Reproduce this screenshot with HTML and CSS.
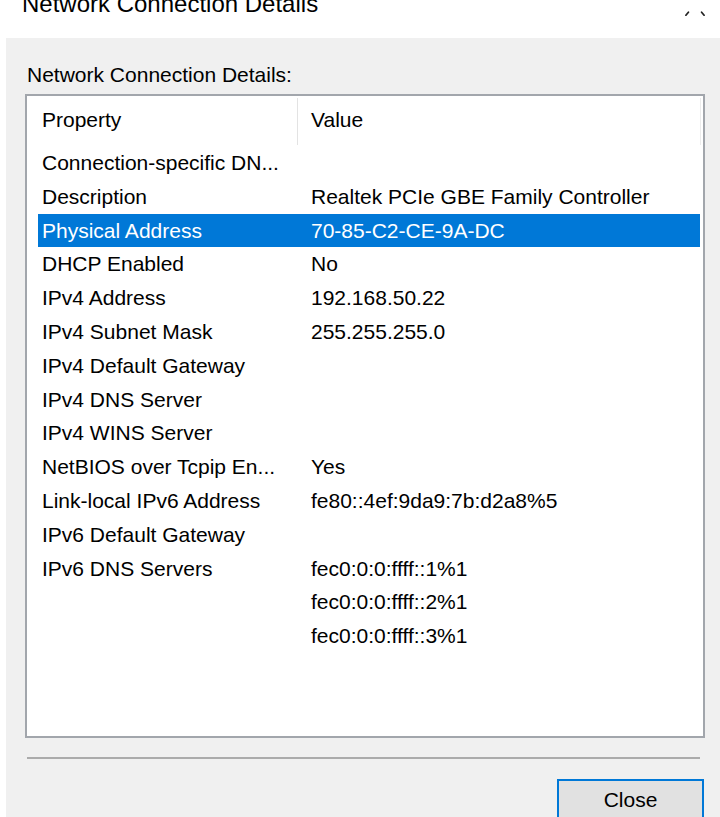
FILE: index.html
```html
<!DOCTYPE html>
<html lang="en">
<head>
<meta charset="utf-8">
<title>Network Connection Details</title>
<link rel="stylesheet" href="styles.css">
</head>
<body>
<div class="window">
  <div class="titlebar">
    <span class="title">Network Connection Details</span>
    <svg class="close-x" viewBox="0 0 20 16" aria-hidden="true">
      <path d="M3.4 12.2 L0.9 15.3 M16.6 12.2 L19.1 15.3" stroke="#222" stroke-width="1.7" stroke-linecap="round" fill="none"/>
    </svg>
  </div>
  <div class="dialog">
    <div class="label">Network Connection Details:</div>
    <div class="list">
      <div class="list-header">
        <div class="hcol hcol-prop">Property</div>
        <div class="hcol hcol-val">Value</div>
      </div>
      <div class="rows">
        <div class="row"><span class="cell-prop">Connection-specific DN...</span><span class="cell-val"></span></div>
        <div class="row"><span class="cell-prop">Description</span><span class="cell-val">Realtek PCIe GBE Family Controller</span></div>
        <div class="row selected"><span class="cell-prop">Physical Address</span><span class="cell-val">70-85-C2-CE-9A-DC</span></div>
        <div class="row"><span class="cell-prop">DHCP Enabled</span><span class="cell-val">No</span></div>
        <div class="row"><span class="cell-prop">IPv4 Address</span><span class="cell-val">192.168.50.22</span></div>
        <div class="row"><span class="cell-prop">IPv4 Subnet Mask</span><span class="cell-val">255.255.255.0</span></div>
        <div class="row"><span class="cell-prop">IPv4 Default Gateway</span><span class="cell-val"></span></div>
        <div class="row"><span class="cell-prop">IPv4 DNS Server</span><span class="cell-val"></span></div>
        <div class="row"><span class="cell-prop">IPv4 WINS Server</span><span class="cell-val"></span></div>
        <div class="row"><span class="cell-prop">NetBIOS over Tcpip En...</span><span class="cell-val">Yes</span></div>
        <div class="row"><span class="cell-prop">Link-local IPv6 Address</span><span class="cell-val">fe80::4ef:9da9:7b:d2a8%5</span></div>
        <div class="row"><span class="cell-prop">IPv6 Default Gateway</span><span class="cell-val"></span></div>
        <div class="row"><span class="cell-prop">IPv6 DNS Servers</span><span class="cell-val">fec0:0:0:ffff::1%1</span></div>
        <div class="row"><span class="cell-prop"></span><span class="cell-val">fec0:0:0:ffff::2%1</span></div>
        <div class="row"><span class="cell-prop"></span><span class="cell-val">fec0:0:0:ffff::3%1</span></div>
      </div>
    </div>
    <div class="sep"></div>
    <div class="actions">
      <button class="btn" type="button">Close</button>
    </div>
  </div>
</div>
</body>
</html>
```
FILE: styles.css
```css
html, body {
  margin: 0;
  height: 817px;
  overflow: hidden;
  background: #ffffff;
  font-family: "Liberation Sans", Arial, sans-serif;
  color: #000000;
}

/* caption strip of the window, scrolled partly out of view */
.titlebar {
  height: 38px;
  display: flex;
  justify-content: space-between;
  align-items: flex-start;
  overflow: hidden;
}

.title {
  font-size: 24px;
  line-height: 24px;
  margin: -8px 0 0 22px;
  white-space: nowrap;
}

.close-x {
  width: 20px;
  height: 16px;
  margin-right: 15px;
}

/* dialog client area */
.dialog {
  margin-left: 6px;
  height: 779px;
  box-sizing: border-box;
  background: #f0f0f0;
  padding: 25px 15px 0 19px;
}

.label {
  font-size: 21px;
  line-height: 24px;
  margin: 0 0 7px 2px;
  white-space: nowrap;
}

/* list view */
.list {
  height: 644px;
  box-sizing: border-box;
  border: 2px solid #a2a6ac;
  background: #ffffff;
  overflow: hidden;
}

.list-header {
  display: flex;
  height: 50px;
  box-sizing: border-box;
  padding: 2px 0 1px 0;
  font-size: 21px;
}

.hcol {
  display: flex;
  align-items: center;
  box-sizing: border-box;
  padding-bottom: 4px;
  line-height: 24px;
  white-space: nowrap;
}

.hcol-prop {
  width: 271px;
  padding-left: 15px;
  border-right: 1px solid #e3e3e3;
}

.hcol-val {
  width: 403px;
  padding-left: 13px;
  border-right: 1px solid #ececec;
}

.rows {
  display: flex;
  flex-direction: column;
}

.row {
  display: flex;
  height: 33.8px;
  line-height: 33.8px;
  margin-left: 11px;
  width: 662px;
  font-size: 21px;
  white-space: nowrap;
}

.row.selected {
  background: #0078d7;
  color: #ffffff;
}

.cell-prop {
  width: 273px;
  flex: none;
  padding-left: 4px;
  box-sizing: border-box;
}

.cell-val {
  flex: 1;
}

/* etched divider above the buttons */
.sep {
  height: 2px;
  background: #ababab;
  margin: 19px 5px 0 2px;
}

.actions {
  display: flex;
  justify-content: flex-end;
  margin: 20px 1px 0 0;
}

.btn {
  width: 147px;
  height: 42px;
  box-sizing: border-box;
  border: 2px solid #0078d7;
  background: #e1e1e1;
  padding: 0;
  font-family: "Liberation Sans", Arial, sans-serif;
  font-size: 21px;
  color: #000000;
}
```
